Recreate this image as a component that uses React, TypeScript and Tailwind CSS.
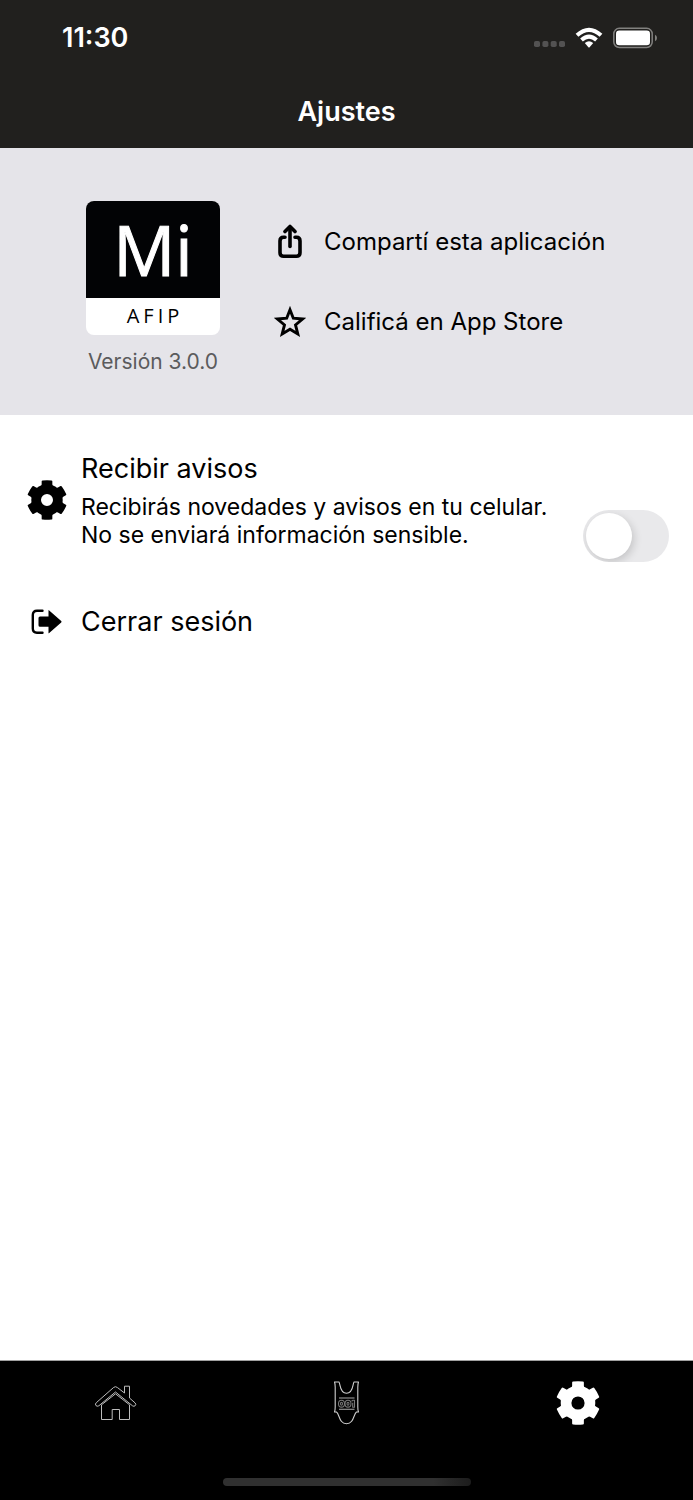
import { useState } from "react";
import type { ReactNode } from "react";

const TEETH = [0, 60, 120, 180, 240, 300];

function GearIcon({ className }: { className?: string }) {
  return (
    <svg viewBox="0 0 42 42" className={className} fill="currentColor" aria-hidden="true">
      <circle cx="21" cy="21" r="11.4" fill="none" stroke="currentColor" strokeWidth="10.2" />
      {TEETH.map((angle) => (
        <path
          key={angle}
          d="M14 7.4 Q15.4 6.2 15.4 4.5 V1.4 Q15.4 .5 16.4 .4 Q21 -.1 25.6 .4 Q26.6 .5 26.6 1.4 V4.5 Q26.6 6.2 28 7.4 L25 12 H17 Z"
          transform={`rotate(${angle} 21 21)`}
        />
      ))}
    </svg>
  );
}

function ShareIcon() {
  return (
    <svg viewBox="0 0 32 36" className="h-9 w-8 shrink-0" fill="none" stroke="currentColor" strokeWidth="3.6" strokeLinecap="round" strokeLinejoin="round" aria-hidden="true">
      <path d="M11 13.3H9.5Q6 13.3 6 17V28.5Q6 32.2 9.5 32.2H22.5Q26 32.2 26 28.5V17Q26 13.3 22.5 13.3H21" />
      <path d="M16 22.5V4" />
      <path d="M11 7.5 16 2.5 21 7.5" />
    </svg>
  );
}

function StarIcon() {
  return (
    <svg viewBox="0 0 32 36" className="h-9 w-8 shrink-0" fill="none" stroke="currentColor" strokeWidth="2.9" aria-hidden="true">
      <path d="M16 5.8 19.3 14.2 28.5 15 21.5 20.9 23.8 30 16 25.2 8.2 30 10.5 20.9 3.5 15 12.7 14.2Z" />
    </svg>
  );
}

function LogoutIcon() {
  return (
    <svg viewBox="0 0 32 26" className="h-[26px] w-8" aria-hidden="true">
      <path d="M11.5 1.8H6Q1.8 1.8 1.8 6V19.5Q1.8 23.7 6 23.7H11.5" fill="none" stroke="currentColor" strokeWidth="2.4" strokeLinecap="round" />
      <path d="M9 7.5H17.5V1.5Q17.5 .8 18.2 1.4L30.2 12Q31 12.7 30.2 13.4L18.2 24Q17.5 24.6 17.5 23.9V17.8H9Q7.5 17.8 7.5 16.3V9Q7.5 7.5 9 7.5Z" fill="currentColor" />
    </svg>
  );
}

function HomeIcon() {
  return (
    <svg viewBox="0 0 44 44" className="size-11" fill="none" stroke="#bdbdbd" strokeWidth="1" strokeLinejoin="round" aria-hidden="true">
      <path d="M23.5 6.6 30.5 12V5.2H35.5V17L41.2 22Q42.4 23.5 41.2 24.7Q40 25.8 38.5 24.8L21.5 11 4.8 24.8Q3 25.8 1.9 24.5Q.8 23 2.3 21.7L19.7 6.4Q21.5 4.9 23.5 6.6Z" />
      <path d="M7.5 23.8 21.5 12.8 35.5 23.8V38.5H25.5V28.5H18.2V38.5H7.5Z" />
    </svg>
  );
}

function BadgeIcon() {
  return (
    <svg viewBox="0 0 44 44" className="size-11" fill="none" stroke="#cfcfcf" strokeWidth="1.1" strokeLinejoin="round" aria-hidden="true">
      <path d="M9.5 1H14C15.5 3 14.5 12.2 21.5 12.2C28.5 12.2 27.5 3 29 1H33.5Q32.8 3 32.8 6V26Q32.8 29 33.5 31H31.5C28.5 33 29 42.7 21.5 42.7C14 42.7 14.5 33 11.5 31H9.5Q10.2 29 10.2 26V6Q10.2 3 9.5 1Z" />
      <path d="M14 17H29.5M14 28.3H29.5" stroke="#aaa" />
      <g stroke="#777">
        <ellipse cx="16.5" cy="22.7" rx="3" ry="3.4" />
        <ellipse cx="16.5" cy="22.7" rx="1" ry="1.5" />
        <ellipse cx="23" cy="22.7" rx="3" ry="3.4" />
        <ellipse cx="23" cy="22.7" rx="1" ry="1.5" />
        <path d="M26.5 20.3 28 19.3H29.5V26.2H27.7V21.8" />
      </g>
    </svg>
  );
}

function StatusIcons() {
  return (
    <div className="flex items-center">
      <svg viewBox="0 0 32 22" className="mr-2.5 h-[22px] w-8" fill="#535252" aria-hidden="true">
        <rect x="1" y="14" width="6" height="6" rx="1.8" />
        <rect x="9.4" y="14" width="6" height="6" rx="1.8" />
        <rect x="17.7" y="14" width="6" height="6" rx="1.8" />
        <rect x="26" y="14" width="6" height="6" rx="1.8" />
      </svg>
      <svg viewBox="0 0 28 22" className="mr-2.5 h-[22px] w-7" fill="none" stroke="white" strokeWidth="4.1" aria-hidden="true">
        <path d="M2 8.2Q14 -2.6 26 8.2" />
        <path d="M6.5 13Q14 6.4 21.5 13" />
        <path d="M9.8 16.1Q14 12.3 18.2 16.1L14.6 20.2Q14 20.8 13.4 20.2Z" fill="white" stroke="none" />
      </svg>
      <svg viewBox="0 0 44 22" className="h-[22px] w-11" aria-hidden="true">
        <rect x=".8" y="1.3" width="38.4" height="19.2" rx="5.5" fill="none" stroke="#82817f" strokeWidth="1.5" />
        <rect x="3" y="3.6" width="34" height="14.6" rx="3.3" fill="white" />
        <path d="M42 7.8Q44 8.8 44 11Q44 13.2 42 14.2Z" fill="#82817f" />
      </svg>
    </div>
  );
}

function AppLogo() {
  return (
    <div className="flex size-[134px] flex-col overflow-hidden rounded-lg bg-white text-center font-['Open_Sans',sans-serif]">
      <div className="h-[97px] bg-[#020305] text-[69px] leading-[96px] text-white [-webkit-text-stroke:1px_white]">Mi</div>
      <div className="pl-1 text-xl leading-9 tracking-[4px] text-black">AFIP</div>
    </div>
  );
}

function ActionButton({ icon, children }: { icon: ReactNode; children: ReactNode }) {
  return (
    <button type="button" className="flex items-center gap-[18px] text-left text-2xl leading-9">
      {icon}
      <span>{children}</span>
    </button>
  );
}

export default function App() {
  const [notifications, setNotifications] = useState(false);

  return (
    <div className="flex min-h-screen flex-col bg-white font-['Inter',sans-serif] text-black">
      <header className="bg-[#21201e] pb-5 text-white">
        <div className="flex h-[76px] items-center justify-between pr-9 pl-[62px]">
          <time className="text-[27px] font-semibold">11:30</time>
          <StatusIcons />
        </div>
        <h1 className="pt-5 text-center text-[27px] leading-8 font-semibold">Ajustes</h1>
      </header>

      {/* App info */}
      <section className="flex gap-[54px] bg-[#e5e4e9] pt-[53px] pb-9 pl-[86px]">
        <div className="flex w-[134px] flex-col items-center">
          <AppLogo />
          <p className="mt-2.5 text-[21px] leading-[34px] whitespace-nowrap text-[#5b5b5d]">Versión 3.0.0</p>
        </div>
        <div className="flex flex-col items-start gap-11 pt-[23px]">
          <ActionButton icon={<ShareIcon />}>Compartí esta aplicación</ActionButton>
          <ActionButton icon={<StarIcon />}>Calificá en App Store</ActionButton>
        </div>
      </section>

      {/* Settings */}
      <main className="flex-1 pt-9">
        <div className="flex pr-6 pl-[27px]">
          <GearIcon className="mt-[29px] size-10 shrink-0" />
          <label htmlFor="avisos" className="ml-3.5 flex-1">
            <span className="block text-[27px] leading-9">Recibir avisos</span>
            <span className="mt-1.5 block text-[23px] leading-7 whitespace-nowrap">
              Recibirás novedades y avisos en tu celular.
              <br />
              No se enviará información sensible.
            </span>
          </label>
          <input
            id="avisos"
            type="checkbox"
            role="switch"
            checked={notifications}
            onChange={(e) => setNotifications(e.target.checked)}
            className="mt-[59px] h-[52px] w-[86px] shrink-0 appearance-none overflow-hidden rounded-full bg-[#e9e9eb] p-[3px] before:block before:size-[46px] before:rounded-full before:bg-white before:shadow-[2px_3px_8px_rgba(0,0,0,0.16)] before:transition-transform checked:bg-green-500 checked:before:translate-x-[34px]"
          />
        </div>
        <button type="button" className="mt-[42px] flex w-full items-center gap-[18px] pl-[31px] text-left text-[27px] leading-9">
          <LogoutIcon />
          Cerrar sesión
        </button>
      </main>

      <nav className="border-t border-neutral-400 bg-black pb-3.5 text-white">
        <div className="grid h-[117px] grid-cols-3 items-start justify-items-center pt-5">
          <a href="#inicio" aria-label="Inicio">
            <HomeIcon />
          </a>
          <a href="#credencial" aria-label="Credencial">
            <BadgeIcon />
          </a>
          <a href="#ajustes" aria-label="Ajustes" aria-current="page">
            <GearIcon className="size-11" />
          </a>
        </div>
        <div className="mx-auto h-2 w-[248px] rounded-full bg-linear-to-r from-[#303030] from-85% to-[#1c1c1c]" />
      </nav>
    </div>
  );
}
